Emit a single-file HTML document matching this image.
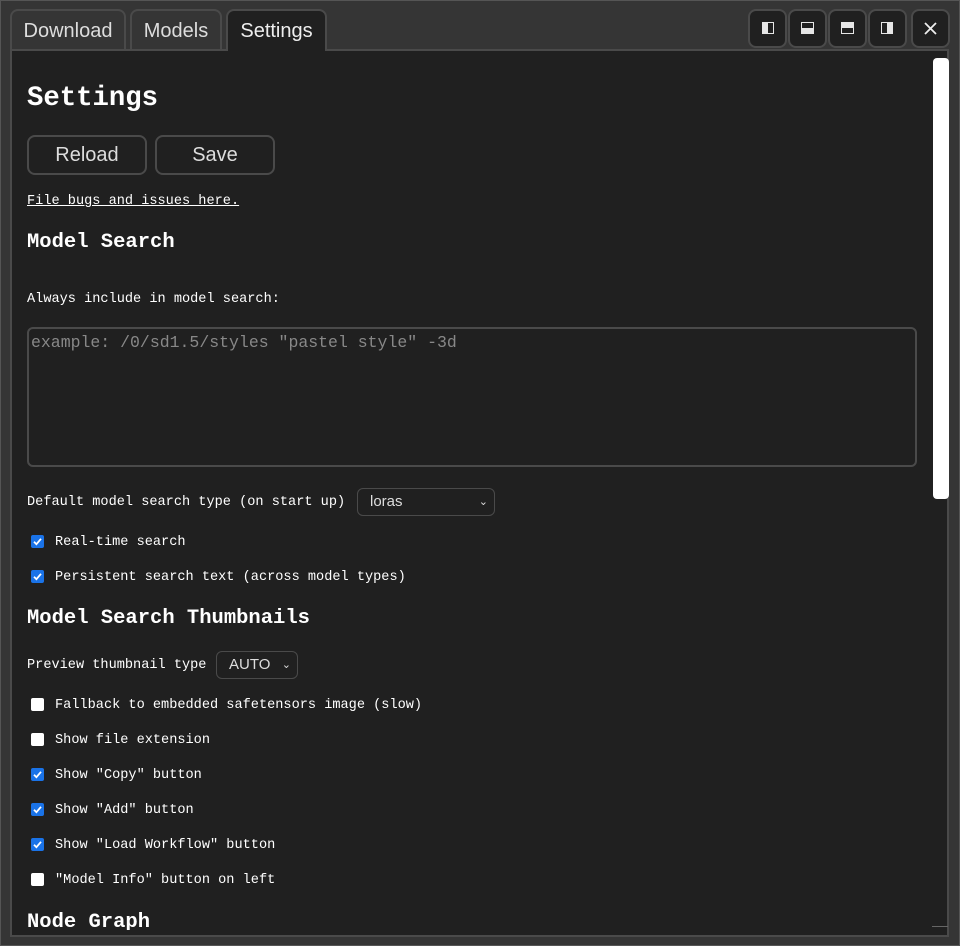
<!DOCTYPE html>
<html><head><meta charset="utf-8"><style>
*{box-sizing:border-box;margin:0;padding:0}
body{width:960px;height:946px;background:#353535;position:relative;overflow:hidden;font-family:"Liberation Mono",monospace;color:#fff}
.frame{position:absolute;left:0;top:0;width:960px;height:946px;border:1px solid #555}
.tab{position:absolute;top:9px;height:41px;border:2px solid #4a4a4a;border-bottom:none;border-radius:8px 8px 0 0;background:#353535;font-family:"Liberation Sans",sans-serif;font-size:20px;color:#ddd;text-align:center;line-height:40px}
.tab.act{background:#202020;color:#eee}
.ib{position:absolute;top:9px;width:39px;height:39px;border:2px solid #4a4a4a;border-radius:8px;background:#202020}
.panel{position:absolute;left:10px;top:49px;width:939px;height:888px;background:#202020;border:2px solid #4a4a4a;overflow:hidden}
.a{position:absolute;white-space:pre}
.t{font-size:13.6px}
.h{font-weight:bold;font-size:20.5px}
.btn{position:absolute;top:135px;width:120px;height:40px;border:2px solid #4a4a4a;border-radius:8px;font-family:"Liberation Sans",sans-serif;font-size:20px;color:#ddd;text-align:center;line-height:36px}
.cb{position:absolute;left:31px;width:13px;height:13px;border-radius:2px}
.cb.on{background:#1a73e8}
.cb.off{background:#fff}
.sel{position:absolute;height:28px;border:1px solid #4a4a4a;border-radius:6px;font-family:"Liberation Sans",sans-serif;font-size:15px;color:#ddd;line-height:26px;padding-left:12px}
</style></head><body>
<div class="frame"></div>
<div class="tab" style="left:10px;width:116px">Download</div>
<div class="tab" style="left:130px;width:92px">Models</div>
<div class="tab act" style="left:226px;width:101px;z-index:2;height:42px">Settings</div>
<div class="ib" style="left:748px"><svg width="35" height="35"><rect x="12" y="11" width="12" height="12" fill="#e6e6e6"/><rect x="18" y="12" width="5" height="10" fill="#202020"/></svg></div>
<div class="ib" style="left:788px"><svg width="35" height="35"><rect x="11" y="11" width="13" height="12" fill="#e6e6e6"/><rect x="12" y="12" width="11" height="5" fill="#202020"/></svg></div>
<div class="ib" style="left:828px"><svg width="35" height="35"><rect x="11" y="11" width="13" height="12" fill="#e6e6e6"/><rect x="12" y="17" width="11" height="5" fill="#202020"/></svg></div>
<div class="ib" style="left:868px"><svg width="35" height="35"><rect x="11" y="11" width="12" height="12" fill="#e6e6e6"/><rect x="12" y="12" width="5" height="10" fill="#202020"/></svg></div>
<div class="ib" style="left:911px;width:39px"><svg width="35" height="35"><path d="M12 12L23 23M23 12L12 23" stroke="#eee" stroke-width="1.8"/></svg></div>
<div class="panel"></div>
<div style="position:absolute;left:933px;top:58px;width:16px;height:441px;background:#fff;border-radius:4px"></div>
<div class="a" style="left:27px;top:83px;font-size:27.3px;font-weight:bold">Settings</div>
<div class="btn" style="left:27px">Reload</div>
<div class="btn" style="left:155px">Save</div>
<div class="a t" style="left:27px;top:194px;text-decoration:underline">File bugs and issues here.</div>
<div class="a h" style="left:27px;top:231px">Model Search</div>
<div class="a t" style="left:27px;top:292px">Always include in model search:</div>
<div style="position:absolute;left:27px;top:327px;width:890px;height:140px;border:2px solid #4a4a4a;border-radius:6px"></div>
<div class="a" style="left:31px;top:333px;font-size:16.5px;color:#888">example: /0/sd1.5/styles "pastel style" -3d</div>
<div class="a t" style="left:27px;top:495px">Default model search type (on start up)</div>
<div class="sel" style="left:357px;top:488px;width:138px">loras<span style="position:absolute;right:6px;font-size:11px">&#8964;</span></div>
<svg width="0" height="0" style="position:absolute"><defs><symbol id="ck" viewBox="0 0 13 13"><path d="M3 6.8L5.4 9.2L10 3.8" stroke="#fff" stroke-width="1.8" fill="none"/></symbol></defs></svg>
<div class="cb on" style="top:535px"><svg width="13" height="13"><use href="#ck"/></svg></div><div class="a t" style="left:55px;top:535px">Real-time search</div>
<div class="cb on" style="top:570px"><svg width="13" height="13"><use href="#ck"/></svg></div><div class="a t" style="left:55px;top:570px">Persistent search text (across model types)</div>
<div class="a h" style="left:27px;top:607px">Model Search Thumbnails</div>
<div class="a t" style="left:27px;top:658px">Preview thumbnail type</div>
<div class="sel" style="left:216px;top:651px;width:82px">AUTO<span style="position:absolute;right:6px;font-size:11px">&#8964;</span></div>
<div class="cb off" style="top:698px"></div><div class="a t" style="left:55px;top:698px">Fallback to embedded safetensors image (slow)</div>
<div class="cb off" style="top:733px"></div><div class="a t" style="left:55px;top:733px">Show file extension</div>
<div class="cb on" style="top:768px"><svg width="13" height="13"><use href="#ck"/></svg></div><div class="a t" style="left:55px;top:768px">Show "Copy" button</div>
<div class="cb on" style="top:803px"><svg width="13" height="13"><use href="#ck"/></svg></div><div class="a t" style="left:55px;top:803px">Show "Add" button</div>
<div class="cb on" style="top:838px"><svg width="13" height="13"><use href="#ck"/></svg></div><div class="a t" style="left:55px;top:838px">Show "Load Workflow" button</div>
<div class="cb off" style="top:873px"></div><div class="a t" style="left:55px;top:873px">"Model Info" button on left</div>
<div style="position:absolute;left:12px;top:910px;width:920px;height:20px;overflow:hidden"><div class="a h" style="left:15px;top:1px">Node Graph</div></div>
<div style="position:absolute;left:932px;top:926px;width:16px;height:1px;background:#666"></div>
</body></html>
